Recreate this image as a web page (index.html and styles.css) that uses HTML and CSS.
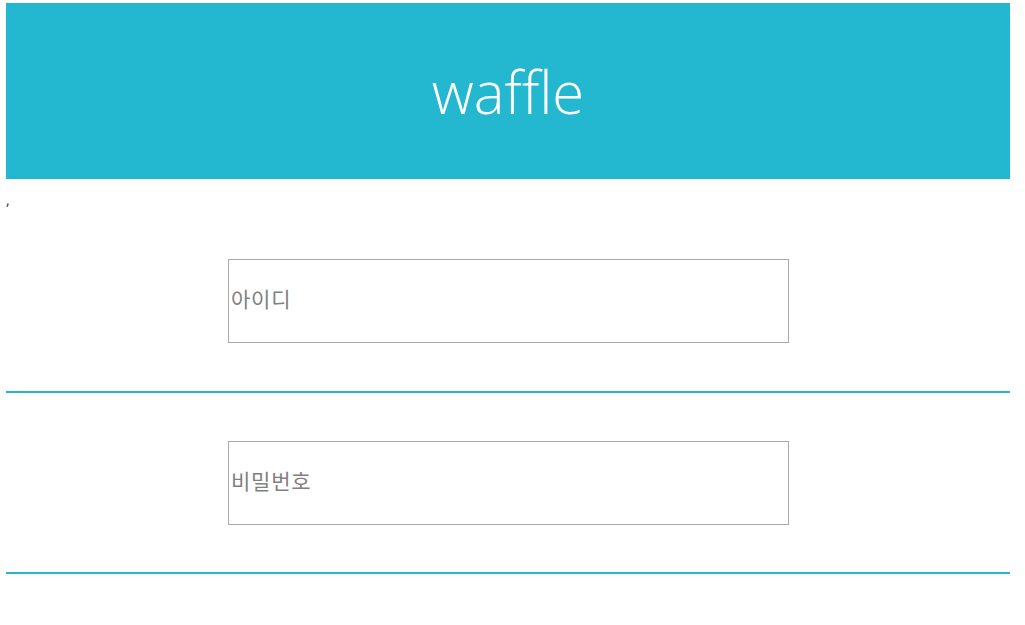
FILE: index.html
```html
<!DOCTYPE html>
<html lang="ko">
<head>
<meta charset="utf-8">
<title>waffle</title>
<link rel="stylesheet" href="styles.css">
</head>
<body>
<div class="page">
  <header class="banner">
    <h1 class="logo">waffle</h1>
  </header>
  <div class="stray">,</div>
  <form class="login">
    <div class="field">
      <input class="box" type="text" placeholder="아이디">
    </div>
    <div class="field">
      <input class="box" type="password" placeholder="비밀번호">
    </div>
  </form>
</div>
</body>
</html>
```
FILE: styles.css
```css
html, body {
  margin: 0;
  padding: 0;
  background: #ffffff;
}
.page {
  padding: 3px 15px 0 6px;
  font-family: "Noto Sans", "Noto Sans CJK KR", sans-serif;
}
.banner {
  background: #23b7d0;
  height: 176px;
  display: flex;
  align-items: center;
  justify-content: center;
}
.logo {
  margin: 0;
  font-family: "Open Sans", sans-serif;
  font-weight: 300;
  font-size: 58px;
  color: #ffffff;
  line-height: 1;
  padding-top: 1px;
}
.stray {
  padding-top: 9px;
  height: 23px;
  line-height: 23px;
  font-size: 14px;
  color: #333;
}
.login {
  margin: 0;
}
.field {
  display: flex;
  justify-content: center;
  padding: 48px 0 48px 0;
  border-bottom: 2px solid #23b7d0;
}
.field + .field {
  padding-bottom: 47px;
}
.box {
  box-sizing: border-box;
  width: 561px;
  height: 84px;
  margin-left: 1px;
  border: 1px solid #a9a9a9;
  padding: 0 2px 6px 2px;
  font-family: "Noto Sans CJK KR", "Noto Sans", sans-serif;
  font-size: 21px;
  letter-spacing: 0.8px;
  color: #333;
  outline: none;
}
.box::placeholder {
  color: #808080;
}
```
